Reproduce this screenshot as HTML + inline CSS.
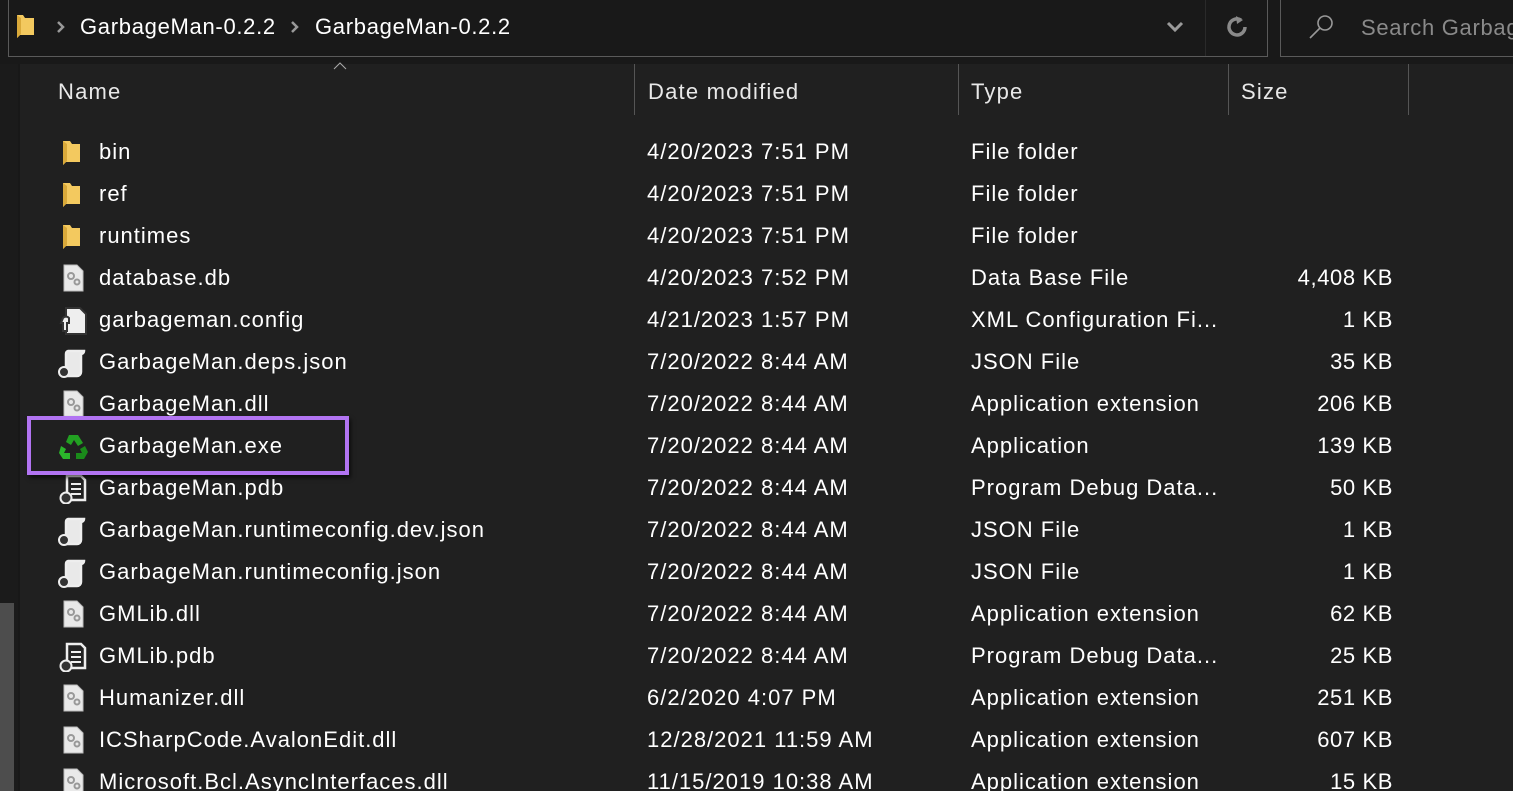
<!DOCTYPE html>
<html><head><meta charset="utf-8"><style>
*{margin:0;padding:0;box-sizing:border-box}
html,body{width:1513px;height:791px;overflow:hidden}
body{background:#202020;font-family:"Liberation Sans",sans-serif;color:#fff;position:relative}
.top{position:absolute;left:0;top:0;width:1513px;height:64px;background:#191919}
.addr{position:absolute;left:8px;top:-2px;width:1260px;height:59px;border:1px solid #5a5a5a;border-top:none}
.search{position:absolute;left:1280px;top:-2px;width:260px;height:59px;border:1px solid #5a5a5a;border-top:none}
.t{position:absolute;font-size:22px;white-space:nowrap;letter-spacing:.7px}
.lstrip{position:absolute;left:0;top:64px;width:18px;height:727px;background:#1b1b1b}
.sb{position:absolute;left:0;top:603px;width:14px;height:188px;background:#4d4d4d}
.div{position:absolute;top:64px;width:1px;height:51px;background:#555}
.h{position:absolute;top:79px;font-size:22px;color:#e8e8e8;letter-spacing:1.2px}
.row{position:absolute;left:0;height:42px;width:1513px}
.row span{position:absolute;top:8px;font-size:22px;color:#fff;white-space:nowrap;letter-spacing:1px}
.ic{position:absolute;left:60px;top:7px}
</style></head><body>
<div class="top"></div>
<div class="addr"></div>
<div class="search"></div>
<svg style="position:absolute;left:16px;top:13px" width="20" height="26"><path d="M1 2h6l2 3h9v17H4l-3 3z" fill="#f3c95f"/><path d="M1 2v23l4-4V5z" fill="#d9a93a"/></svg>
<svg style="position:absolute;left:56px;top:20px" width="10" height="14"><path d="M2 2l5 5-5 5" stroke="#999" stroke-width="2.5" fill="none"/></svg>
<div class="t" style="left:80px;top:14px">GarbageMan-0.2.2</div>
<svg style="position:absolute;left:290px;top:20px" width="10" height="14"><path d="M2 2l5 5-5 5" stroke="#999" stroke-width="2.5" fill="none"/></svg>
<div class="t" style="left:315px;top:14px">GarbageMan-0.2.2</div>
<svg style="position:absolute;left:1165px;top:20px" width="20" height="14"><path d="M3 3l7 7 7-7" stroke="#9a9a9a" stroke-width="3" fill="none"/></svg>
<div style="position:absolute;left:1205px;top:0;width:1px;height:56px;background:#2a2a2a"></div>
<svg style="position:absolute;left:1225px;top:14px" width="26" height="26"><path d="M16 6A8 8 0 1 0 20 13" stroke="#8a8a8a" stroke-width="3.5" fill="none"/><path d="M11 2l7 4-6 4z" fill="#8a8a8a"/></svg>
<svg style="position:absolute;left:1307px;top:13px" width="28" height="28"><circle cx="18" cy="10" r="7" stroke="#999" stroke-width="1.6" fill="none"/><path d="M13 15L3 25" stroke="#999" stroke-width="1.6"/></svg>
<div class="t" style="left:1361px;top:15px;color:#8a8a8a">Search Garbag</div>
<div class="lstrip"></div><div class="sb"></div>
<div style="position:absolute;left:18px;top:64px;width:2px;height:727px;background:#181818"></div>
<svg style="position:absolute;left:333px;top:62px" width="14" height="8"><path d="M1 7l6-6 6 6" stroke="#aaa" fill="none"/></svg>
<div class="div" style="left:634px"></div><div class="div" style="left:958px"></div><div class="div" style="left:1228px"></div><div class="div" style="left:1408px"></div>
<div class="h" style="left:58px">Name</div>
<div class="h" style="left:648px">Date modified</div>
<div class="h" style="left:971px">Type</div>
<div class="h" style="left:1241px">Size</div>
<div id="rows"></div>
<div style="position:absolute;left:27px;top:416px;width:322px;height:59px;border:4px solid #b274f2;box-shadow:2px 3px 4px rgba(0,0,0,.6)"></div>
<script>
const F='<svg class="ic" width="24" height="28"><path d="M3 3h7l2 3h8v18H6l-3 3z" fill="#f3c95f"/><path d="M3 3v24l4-4V6z" fill="#d9a93a"/></svg>';
const D='<svg class="ic" width="24" height="28" style="left:63px"><path d="M1 1h13l6 6v20H1z" fill="#e9e9e9" stroke="#bbb"/><circle cx="8" cy="12" r="3" fill="none" stroke="#999" stroke-width="2"/><circle cx="14" cy="18" r="2.5" fill="none" stroke="#999" stroke-width="2"/></svg>';
const C='<svg class="ic" width="30" height="30" style="left:58px"><path d="M8 2h14l6 6v20H8z" fill="#eee" stroke="#333" stroke-width="2"/><path d="M5 12a4 4 0 0 1 6 0v5h-2v8H5v-8H3z" fill="#eee" stroke="#333" stroke-width="2"/></svg>';
const J='<svg class="ic" width="30" height="30" style="left:58px"><path d="M10 3h16a3 3 0 0 1-3 3v18a4 4 0 0 1-4 4H8V6a3 3 0 0 1 2-3z" fill="#e9e9e9" stroke="#eee" stroke-width="2.5"/><circle cx="6" cy="24" r="5" fill="#333" stroke="#eee" stroke-width="2"/></svg>';
const P='<svg class="ic" width="30" height="30" style="left:58px"><path d="M9 2h14l4 4v20H9z" fill="#222" stroke="#eee" stroke-width="2.5"/><path d="M13 10h10M13 15h10M13 20h10" stroke="#eee" stroke-width="2"/><circle cx="8" cy="24" r="5.5" fill="#333" stroke="#eee" stroke-width="2"/></svg>';
const E='<svg class="ic" width="32" height="30" style="left:58px"><path d="M11 3h9l5 8-5 3-4-6-3 5-5-3z" fill="#22a022"/><path d="M27 14l3 6-4 7h-8v-6h6l-2-4z" fill="#1a8a1a"/><path d="M3 14l5 3-2 4h6v6H5l-4-6z" fill="#2bb52b"/></svg>';
const R=[[F,'bin','4/20/2023 7:51 PM','File folder',''],[F,'ref','4/20/2023 7:51 PM','File folder',''],[F,'runtimes','4/20/2023 7:51 PM','File folder',''],[D,'database.db','4/20/2023 7:52 PM','Data Base File','4,408 KB'],[C,'garbageman.config','4/21/2023 1:57 PM','XML Configuration Fi...','1 KB'],[J,'GarbageMan.deps.json','7/20/2022 8:44 AM','JSON File','35 KB'],[D,'GarbageMan.dll','7/20/2022 8:44 AM','Application extension','206 KB'],[E,'GarbageMan.exe','7/20/2022 8:44 AM','Application','139 KB'],[P,'GarbageMan.pdb','7/20/2022 8:44 AM','Program Debug Data...','50 KB'],[J,'GarbageMan.runtimeconfig.dev.json','7/20/2022 8:44 AM','JSON File','1 KB'],[J,'GarbageMan.runtimeconfig.json','7/20/2022 8:44 AM','JSON File','1 KB'],[D,'GMLib.dll','7/20/2022 8:44 AM','Application extension','62 KB'],[P,'GMLib.pdb','7/20/2022 8:44 AM','Program Debug Data...','25 KB'],[D,'Humanizer.dll','6/2/2020 4:07 PM','Application extension','251 KB'],[D,'ICSharpCode.AvalonEdit.dll','12/28/2021 11:59 AM','Application extension','607 KB'],[D,'Microsoft.Bcl.AsyncInterfaces.dll','11/15/2019 10:38 AM','Application extension','15 KB']];
let h='';R.forEach((r,i)=>{h+=`<div class="row" style="top:${131+i*42}px">${r[0]}<span style="left:99px">${r[1]}</span><span style="left:647px">${r[2]}</span><span style="left:971px">${r[3]}</span><span style="right:120px;letter-spacing:.6px">${r[4]}</span></div>`});
document.getElementById('rows').innerHTML=h;
</script>
</body></html>
